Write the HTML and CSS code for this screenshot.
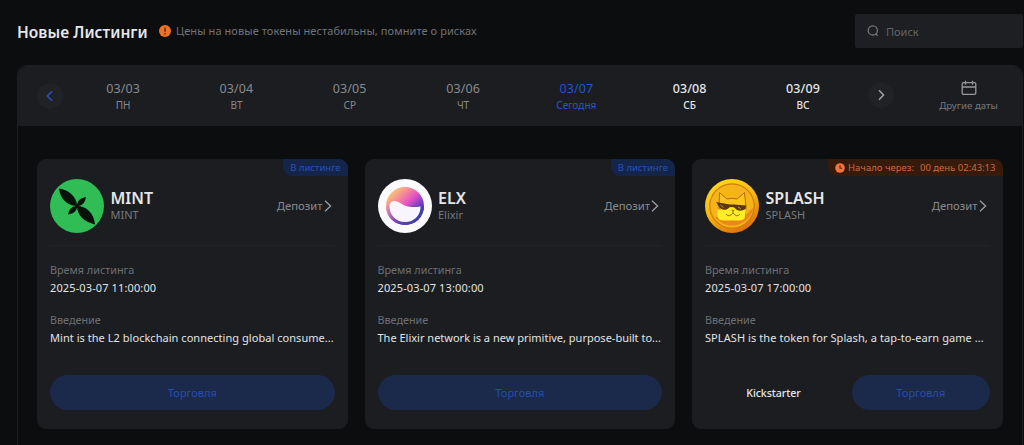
FILE: index.html
```html
<!DOCTYPE html>
<html lang="ru">
<head>
<meta charset="utf-8">
<title>Новые Листинги</title>
<link rel="stylesheet" href="styles.css">
</head>
<body>
<header class="top">
  <h1 class="title">Новые Листинги</h1>
  <svg class="warn" viewBox="0 0 12 12"><circle cx="6" cy="6" r="6" fill="#ed7224"/><path d="M6 2.6v4.1M6 8v1.4" stroke="#6b2c08" stroke-width="1.5"/></svg>
  <p class="note">Цены на новые токены нестабильны, помните о рисках</p>
  <div class="search">
    <svg class="search-icon" viewBox="0 0 14 14" fill="none" stroke="#75777b" stroke-width="1.3"><circle cx="6.8" cy="6.4" r="4.6"/><path d="M9.600 9.800l2 2"/></svg>
    <span class="search-text">Поиск</span>
  </div>
</header>
<main class="panel">
  <nav class="dates">
    <button class="arrow"><svg viewBox="0 0 12 12" fill="none" stroke="#2753cf" stroke-width="1.4"><path d="M8 1.2L3.4 6 8 10.8"/></svg></button>
    <div class="days">
      <div class="day"><b>03/03</b><span>ПН</span></div>
      <div class="day"><b>03/04</b><span>ВТ</span></div>
      <div class="day"><b>03/05</b><span>СР</span></div>
      <div class="day"><b>03/06</b><span>ЧТ</span></div>
      <div class="day today"><b>03/07</b><span>Сегодня</span></div>
      <div class="day next"><b>03/08</b><span>СБ</span></div>
      <div class="day next"><b>03/09</b><span>ВС</span></div>
    </div>
    <button class="arrow right"><svg viewBox="0 0 12 12" fill="none" stroke="#a5a7aa" stroke-width="1.4"><path d="M4 1.2L8.6 6 4 10.8"/></svg></button>
    <div class="other">
      <svg class="calendar" viewBox="0 0 16 16" fill="none" stroke="#96989b" stroke-width="1.3"><rect x="1.2" y="2.7" width="13.6" height="11.6" rx="1.2"/><path d="M1.2 7h13.6M4.5 .8v4M11.5 .8v4"/></svg>
      <span>Другие даты</span>
    </div>
  </nav>
  <section class="cards">
    <article class="card">
      <span class="tag">В листинге</span>
      <div class="head">
        <svg class="coin" viewBox="0 0 54 54"><circle cx="27" cy="27" r="27" fill="#31bd55"/><g fill="#07120a"><path d="M27 27C18 27 10 20 9 9.500C19 11 27 18 27 27Z"/><path d="M27 27C36 27 44 34 45 45.500C34 43 27 36 27 27Z"/><path d="M27 27C27 22 30 19 36 18C35 24 32 27 27 27Z"/><path d="M27 27C27 32 24 34.500 18 35.500C19 30 22 27 27 27Z"/><circle cx="27" cy="27" r="2"/></g></svg>
        <div class="names"><h2>MINT</h2><span>MINT</span></div>
        <a class="deposit">Депозит<svg viewBox="0 0 8 12" fill="none" stroke="#9c9ea1" stroke-width="1.3"><path d="M1 .8L6.600 6 1 11.200"/></svg></a>
      </div>
      <div class="field"><label>Время листинга</label><p class="time">2025-03-07 11:00:00</p></div>
      <div class="field"><label>Введение</label><p class="intro">Mint is the L2 blockchain connecting global consume...</p></div>
      <div class="actions"><button class="trade">Торговля</button></div>
    </article>
    <article class="card">
      <span class="tag">В листинге</span>
      <div class="head">
        <svg class="coin" viewBox="0 0 54 54">
          <defs>
            <linearGradient id="elx" x1=".1" y1=".1" x2=".85" y2=".9"><stop offset="0" stop-color="#f8d36c"/><stop offset=".28" stop-color="#f58a98"/><stop offset=".5" stop-color="#e552c6"/><stop offset=".72" stop-color="#7a3ec4"/><stop offset="1" stop-color="#26359b"/></linearGradient>
            <linearGradient id="ring" x1="0" y1="0" x2="1" y2=".5"><stop offset="0" stop-color="#f39aa0"/><stop offset=".5" stop-color="#7b46b4"/><stop offset="1" stop-color="#2e3da5"/></linearGradient>
          </defs>
          <circle cx="27" cy="27" r="27" fill="#fbfafd"/><circle cx="27" cy="27" r="19" fill="url(#elx)"/><path d="M8 27A19 19 0 0 0 46 27Z" fill="url(#ring)"/>
          <path d="M11.500 26C12.500 21 18 21 23 24.500C29 28.500 35 28.500 42.500 27.500C42.500 37 36 43 27 43C18 43 11 36 11.500 26Z" fill="#f8f5fc"/>
        </svg>
        <div class="names"><h2>ELX</h2><span>Elixir</span></div>
        <a class="deposit">Депозит<svg viewBox="0 0 8 12" fill="none" stroke="#9c9ea1" stroke-width="1.3"><path d="M1 .8L6.600 6 1 11.200"/></svg></a>
      </div>
      <div class="field"><label>Время листинга</label><p class="time">2025-03-07 13:00:00</p></div>
      <div class="field"><label>Введение</label><p class="intro compact">The Elixir network is a new primitive, purpose-built to...</p></div>
      <div class="actions"><button class="trade">Торговля</button></div>
    </article>
    <article class="card">
      <span class="tag soon"><svg viewBox="0 0 10 10"><circle cx="5" cy="5" r="4.800" fill="#ef7440"/><path d="M5 2.200V5.300H7.200" fill="none" stroke="#5c2306" stroke-width="1.100"/></svg><span>Начало через:</span><span class="left">00 день 02:43:13</span></span>
      <div class="head">
        <svg class="coin" viewBox="0 0 54 54">
          <defs><linearGradient id="gold" x1=".2" y1="0" x2=".7" y2="1"><stop offset="0" stop-color="#ffd91f"/><stop offset=".5" stop-color="#f8b711"/><stop offset="1" stop-color="#dc6c10"/></linearGradient></defs>
          <circle cx="27" cy="27" r="27" fill="url(#gold)"/><circle cx="27" cy="27" r="22.200" fill="#f5b51a" stroke="#cf7b0b" stroke-width="1.200"/><path d="M10 38A21.500 21.500 0 0 0 48.500 28L39 38Z" fill="#e88a18"/>
          <path d="M14 28L14.500 13.500L22 20Q27 18.500 32 20L39.500 13.500L41 28L40 38Q27 44 14 38Z" fill="#fbc51c" stroke="#b9690b"/>
          <path d="M12.500 30Q18 33 25 29H30Q36 33 41 30L40 38Q39 41.500 34 41.500H19Q13 41.500 12.500 37Z" fill="#ffed26"/>
          <path d="M11 23L25 25.500H29L41 26.500L40.500 30Q36 33 32 31L28.500 28H25L21.500 30.500Q15 31.500 13 26Z" fill="#5a3810"/><path d="M15.500 26l3 2.500M33 28l3 2" stroke="#c99224"/>
          <path d="M26.500 31l1.500 1 1.500-1M28 32v2M21 35q3 4 7-1 4 5 7 1" fill="none" stroke="#a46c0c"/>
        </svg>
        <div class="names"><h2>SPLASH</h2><span>SPLASH</span></div>
        <a class="deposit">Депозит<svg viewBox="0 0 8 12" fill="none" stroke="#9c9ea1" stroke-width="1.3"><path d="M1 .8L6.600 6 1 11.200"/></svg></a>
      </div>
      <div class="field"><label>Время листинга</label><p class="time">2025-03-07 17:00:00</p></div>
      <div class="field"><label>Введение</label><p class="intro wide">SPLASH is the token for Splash, a tap-to-earn game ...</p></div>
      <div class="actions"><button class="kick">Kickstarter</button><button class="trade">Торговля</button></div>
    </article>
  </section>
</main>
</body>
</html>
```
FILE: styles.css
```css
* { box-sizing: border-box; }
body {
  margin: 0;
  height: 445px;
  overflow: hidden;
  background: #0c0d0f;
  color: #e6e7e9;
  font-family: "Noto Sans", "Open Sans", sans-serif;
  font-size: 11px;
}
h1, h2, p { margin: 0; }
button { border: 0; padding: 0; font: inherit; color: inherit; white-space: nowrap; }
svg { display: block; flex: none; }

.top { display: flex; align-items: center; height: 65px; padding: 0 1px 3px 17px; }
.title { font-size: 15.500px; font-weight: 600; line-height: 22px; padding-top: 2px; white-space: nowrap; width: 142px; letter-spacing: .05px; }
.warn { width: 12px; height: 12px; }
.note { margin-left: 5px; font-size: 11px; line-height: 16px; letter-spacing: .08px; color: #717377; white-space: nowrap; }
.search { display: flex; align-items: center; gap: 6px; width: 168px; height: 34px; margin-left: auto; padding-left: 11px; background: #1d1f23; border-radius: 2px; }
.search-icon { width: 14px; height: 14px; }
.search-text { font-size: 11px; color: #626468; }

.panel { width: 1006px; height: 400px; margin-left: 17px; border: 1px solid #1b1d20; border-radius: 10px 10px 0 0; }
.dates { display: flex; align-items: center; height: 60px; padding-left: 19px; background: #1b1d20; border-radius: 9px 9px 0 0; }
.arrow { display: flex; align-items: center; justify-content: center; width: 26px; height: 26px; border-radius: 50%; background: #202225; }
.arrow svg { width: 12px; height: 12px; }
.arrow.right { margin-bottom: 3px; }
.days { display: grid; grid-template-columns: repeat(7, 113.300px); margin: 0 8px 0 3.500px; }
.day { display: flex; flex-direction: column; align-items: center; color: #888a8e; }
.day b { font-size: 12.500px; font-weight: 400; line-height: 18px; letter-spacing: .1px; }
.day span { font-size: 10px; line-height: 15px; }
.day.today { color: #2455cb; }
.day.next { color: #e4e5e7; }
.day.next b, .day.next span { font-weight: 500; }
.other { display: flex; flex-direction: column; align-items: center; gap: 2px; width: 74px; margin-left: 38px; color: #77797d; font-size: 9.700px; line-height: 15px; white-space: nowrap; }
.calendar { width: 16px; height: 16px; }

.cards { display: grid; grid-template-columns: repeat(3, 310.500px); gap: 17px; padding: 33px 19px 0; }
.card { position: relative; height: 270px; padding: 20px 13px 0; background: #1b1d20; border-radius: 9px; }
.tag { position: absolute; top: 0; right: 0; display: flex; align-items: center; height: 17px; padding: 0 7px; background: #142549; color: #2453bd; border-radius: 0 9px 0 9px; font-size: 9.500px; white-space: nowrap; }
.tag.soon { background: #361a0b; color: #d06a3d; gap: 3px; }
.tag .left { margin-left: 3px; }
.tag svg { width: 10px; height: 10px; }
.head { display: flex; align-items: center; height: 67px; padding-bottom: 13px; border-bottom: 1px solid #212326; }
.coin { width: 54px; height: 54px; }
.names { display: flex; flex-direction: column; margin-left: 6.500px; padding-bottom: 2px; }
.names h2 { font-size: 16px; font-weight: 600; line-height: 19px; }
.names span { font-size: 11px; line-height: 13px; color: #787a7e; }
.deposit { display: flex; align-items: center; gap: 1px; margin-left: auto; padding-right: 3px; font-size: 11.300px; color: #898b8f; }
.deposit svg { width: 8px; height: 12px; }
.field { display: flex; flex-direction: column; padding-top: 16px; }
.field + .field { padding-top: 15px; }
.field label { font-size: 10.800px; line-height: 16px; color: #6d6f73; }
.field p { font-size: 11px; line-height: 19px; white-space: nowrap; color: #e3e4e6; }
.field .time { letter-spacing: .12px; }
.field .intro { letter-spacing: .04px; }
.field .compact { letter-spacing: 0; }
.field .wide { letter-spacing: .08px; }
.actions { display: flex; justify-content: space-between; padding-top: 28px; }
.trade { flex: 1; height: 35px; border-radius: 18px; background: #1b294a; color: #244eb4; font-size: 11px; }
.kick { width: 137px; margin-right: 10px; background: none; font-size: 10.700px; font-weight: 500; letter-spacing: -.1px; }
```
